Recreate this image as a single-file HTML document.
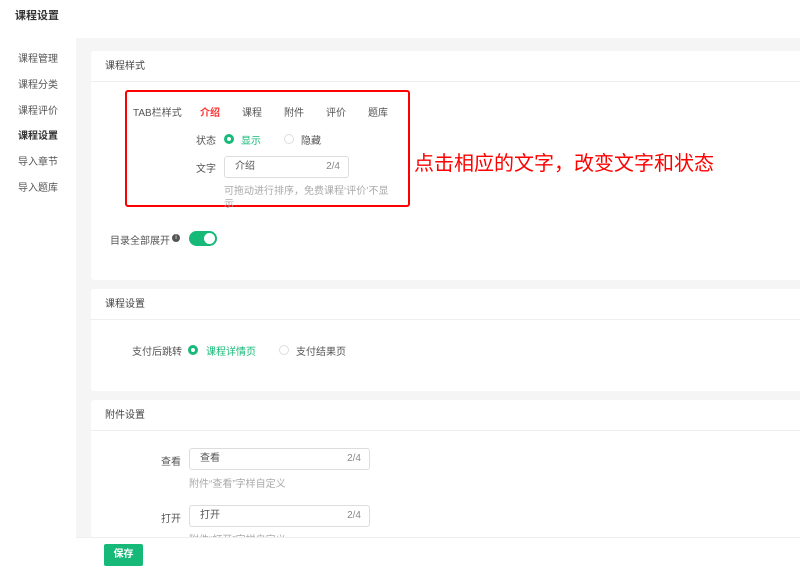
<!DOCTYPE html>
<html><head><meta charset="utf-8"><style>
*{margin:0;padding:0;box-sizing:border-box}
body{width:800px;height:567px;overflow:hidden;background:#f5f5f5;font-family:"Liberation Sans","Noto Sans CJK SC",sans-serif;font-size:10px;color:#555;position:relative}
.a{position:absolute;white-space:nowrap}
.card{position:absolute;left:91px;width:720px;background:#fff;border-radius:3px}
.hd{height:31px;border-bottom:1px solid #eee;padding-left:14px;line-height:31px;font-size:10px;color:#444}
.inp{position:absolute;border:1px solid #ddd;border-radius:3px;background:#fff;height:22px;line-height:20px;padding-left:10px;color:#555}
.inp span{position:absolute;right:8px;color:#888}
.r{position:absolute;width:10px;height:10px;border-radius:50%;border:1px solid #ddd;background:#fff}
.r.on{border:3px solid #17b978;background:#fff}
</style></head><body>
<div class="a" style="left:0;top:0;width:800px;height:38px;background:#fff"></div>
<div class="a" style="left:15px;top:7px;font-size:11px;font-weight:bold;color:#333">课程设置</div>
<div class="a" style="left:0;top:38px;width:76px;height:529px;background:#fff"></div>
<div class="a" style="left:18px;top:50px;color:#555">课程管理</div>
<div class="a" style="left:18px;top:76px;color:#555">课程分类</div>
<div class="a" style="left:18px;top:102px;color:#555">课程评价</div>
<div class="a" style="left:18px;top:127px;color:#333;font-weight:bold">课程设置</div>
<div class="a" style="left:18px;top:153px;color:#555">导入章节</div>
<div class="a" style="left:18px;top:179px;color:#555">导入题库</div>

<div class="card" style="top:51px;height:229px"><div class="hd">课程样式</div></div>
<div class="a" style="left:125px;top:90px;width:285px;height:117px;border:2px solid #f00;border-radius:3px"></div>
<div class="a" style="left:133px;top:104px">TAB栏样式</div>
<div class="a" style="left:200px;top:104px;color:#f33;font-weight:bold">介绍</div>
<div class="a" style="left:242px;top:104px">课程</div>
<div class="a" style="left:284px;top:104px">附件</div>
<div class="a" style="left:326px;top:104px">评价</div>
<div class="a" style="left:368px;top:104px">题库</div>
<div class="a" style="left:196px;top:132px">状态</div>
<div class="r on" style="left:224px;top:134px"></div>
<div class="a" style="left:241px;top:132px;color:#17b978">显示</div>
<div class="r" style="left:284px;top:134px"></div>
<div class="a" style="left:301px;top:132px">隐藏</div>
<div class="a" style="left:196px;top:160px">文字</div>
<div class="inp" style="left:224px;top:156px;width:125px">介绍<span>2/4</span></div>
<div class="a" style="left:224px;top:182px;color:#aaa">可拖动进行排序，免费课程‘评价’不显</div>
<div class="a" style="left:224px;top:195px;color:#aaa">示</div>
<div class="a" style="left:414px;top:147px;color:#f00;font-size:20px">点击相应的文字，改变文字和状态</div>
<div class="a" style="left:110px;top:232px">目录全部展开</div>
<div class="a" style="left:172px;top:234px;width:8px;height:8px;border-radius:50%;background:#555;color:#fff;font-size:6px;line-height:8px;text-align:center">i</div>
<div class="a" style="left:189px;top:231px;width:28px;height:15px;border-radius:8px;background:#17b978"></div>
<div class="a" style="left:204px;top:233px;width:11px;height:11px;border-radius:50%;background:#fff"></div>

<div class="card" style="top:289px;height:102px"><div class="hd">课程设置</div></div>
<div class="a" style="left:132px;top:343px">支付后跳转</div>
<div class="r on" style="left:188px;top:345px"></div>
<div class="a" style="left:206px;top:343px;color:#17b978">课程详情页</div>
<div class="r" style="left:279px;top:345px"></div>
<div class="a" style="left:296px;top:343px">支付结果页</div>

<div class="card" style="top:400px;height:140px"><div class="hd">附件设置</div></div>
<div class="a" style="left:161px;top:453px">查看</div>
<div class="inp" style="left:189px;top:448px;width:181px">查看<span>2/4</span></div>
<div class="a" style="left:189px;top:475px;color:#aaa">附件“查看”字样自定义</div>
<div class="a" style="left:161px;top:510px">打开</div>
<div class="inp" style="left:189px;top:505px;width:181px">打开<span>2/4</span></div>
<div class="a" style="left:189px;top:531px;color:#aaa">附件“打开”字样自定义</div>
<div class="a" style="left:76px;top:537px;width:724px;height:30px;background:#fff;border-top:1px solid #eee"></div>
<div class="a" style="left:104px;top:544px;width:39px;height:22px;background:#17b978;border-radius:2px;color:#fff;font-size:10px;line-height:22px;text-align:center;font-weight:bold">保存</div>
</body></html>
